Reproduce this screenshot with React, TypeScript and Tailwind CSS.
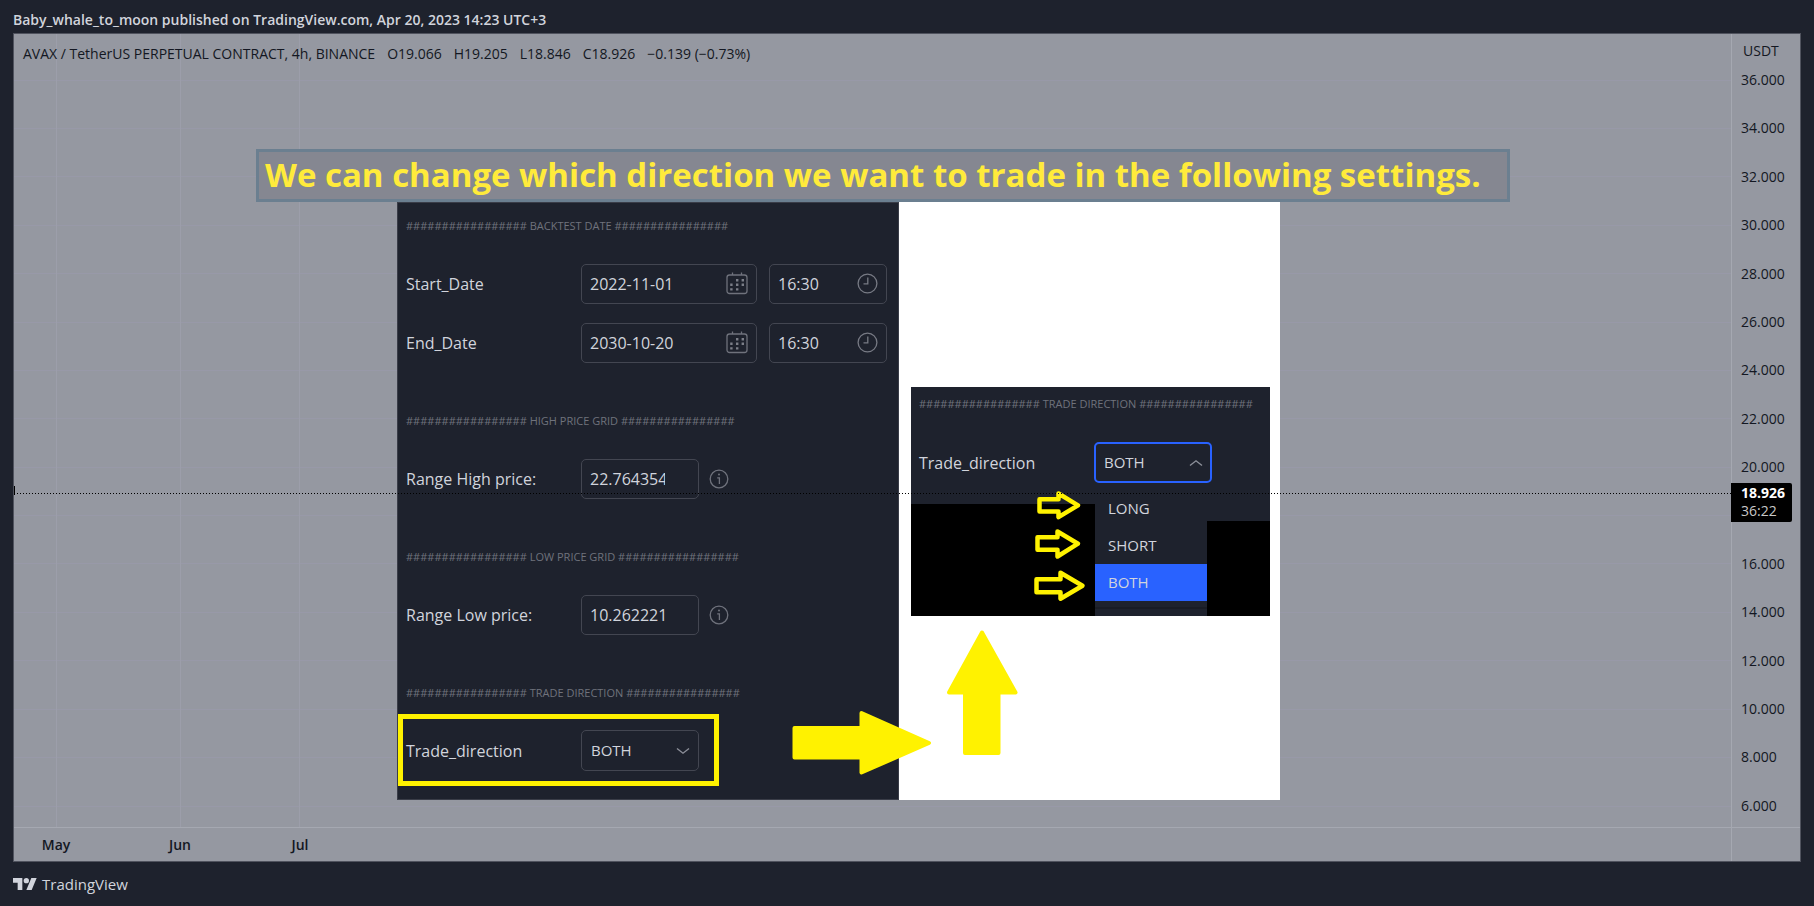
import type { ReactNode } from "react";

const prices = [36, 34, 32, 30, 28, 26, 24, 22, 20, 18, 16, 14, 12, 10, 8, 6];
const PLOT_HEIGHT = 793;
const FIRST_LINE = 46;
const LINE_STEP = 48.4;

function GridLines() {
  return (
    <svg className="absolute inset-0 size-full" aria-hidden="true" shapeRendering="crispEdges">
      {prices.map((p, i) => {
        const y = `${((FIRST_LINE + i * LINE_STEP) / PLOT_HEIGHT) * 100}%`;
        return <line key={p} x1="0" x2="100%" y1={y} y2={y} stroke="#9899a8" />;
      })}
      {[42, 166, 285].map((x) => (
        <line key={x} x1={x} x2={x} y1="0" y2="100%" stroke="#9c9eaa" />
      ))}
    </svg>
  );
}

function Heading({ title, after = 16 }: { title: string; after?: number }) {
  return (
    <h2 className="mb-[5px] flex h-[46px] items-center whitespace-nowrap text-[11px] text-[#6f727c]">
      {"#".repeat(17)} {title} {"#".repeat(after)}
    </h2>
  );
}

function Row({ id, label, children }: { id: string; label: string; children: ReactNode }) {
  return (
    <div className="flex h-[59px] items-center">
      <label htmlFor={id} className="w-[175px] shrink-0 whitespace-nowrap text-[16px] font-medium">
        {label}
      </label>
      {children}
    </div>
  );
}

function CalendarIcon() {
  return (
    <svg className="h-[23px] w-[22px] shrink-0" viewBox="0 0 22 23" fill="none" stroke="#6f727c" strokeWidth="1.3" aria-hidden="true">
      <rect x="1" y="3" width="20" height="18.5" rx="2.5" />
      <path d="M6.5 .5V3M15.5 .5V3" />
      <g fill="#7b7e88" stroke="none">
        <path d="M10 7h2.4v2.4H10zM15.6 7H18v2.4h-2.4zM4.2 11.6h2.4V14H4.2zM10 11.6h2.4V14H10zM15.6 11.6H18V14h-2.4zM4.2 16.2h2.4v2.4H4.2zM10 16.2h2.4v2.4H10z" />
      </g>
    </svg>
  );
}

function ClockIcon() {
  return (
    <svg className="size-[21px] shrink-0" viewBox="0 0 21 21" fill="none" stroke="#777a84" strokeWidth="1.3" aria-hidden="true">
      <circle cx="10.5" cy="10.5" r="9.4" />
      <path d="M10.8 4.5v6.3H6.5" />
    </svg>
  );
}

function InfoIcon() {
  return (
    <svg className="ml-[10px] size-[20px] shrink-0" viewBox="0 0 20 20" fill="none" stroke="#6f727c" strokeWidth="1.3" aria-hidden="true">
      <circle cx="10" cy="10" r="8.8" />
      <path d="M8.2 8.8h2.2V15" />
      <circle cx="10" cy="5.5" r="1" fill="#6f727c" stroke="none" />
    </svg>
  );
}

function Chevron({ up = false }: { up?: boolean }) {
  return (
    <svg className="pointer-events-none absolute right-[9px] top-1/2 h-[8px] w-[14px] -translate-y-1/2" viewBox="0 0 14 8" fill="none" stroke="#8c8f99" strokeWidth="1.4" aria-hidden="true">
      <path d={up ? "M1 6.5 7 1.800l6 4.700" : "M1 1.500 7 6.200l6-4.700"} />
    </svg>
  );
}

const box = "flex h-[40px] items-center rounded-[5px] border border-[#434651] px-[8px]";
const field = "min-w-0 flex-1 bg-transparent text-[16px] font-medium outline-none";

function DateRow({ id, label, date }: { id: string; label: string; date: string }) {
  return (
    <Row id={id} label={label}>
      <div className={`${box} w-[176px]`}>
        <input id={id} className={field} defaultValue={date} />
        <CalendarIcon />
      </div>
      <div className={`${box} ml-[12px] w-[118px]`}>
        <input aria-label={`${label} time`} className={field} defaultValue="16:30" />
        <ClockIcon />
      </div>
    </Row>
  );
}

function PriceRow({ id, label, price }: { id: string; label: string; price: string }) {
  return (
    <Row id={id} label={label}>
      <div className={`${box} w-[118px]`}>
        <input id={id} className="w-[75px] bg-transparent text-[16px] font-medium outline-none" defaultValue={price} />
      </div>
      <InfoIcon />
    </Row>
  );
}

function DirectionSelect({ id, open = false }: { id: string; open?: boolean }) {
  return (
    <div className="relative">
      <select
        id={id}
        defaultValue="BOTH"
        className={
          open
            ? "h-[41px] w-[118px] appearance-none rounded-[5px] border-2 border-[#2962ff] bg-transparent px-[8px] text-[15px] font-medium outline-none"
            : "h-[41px] w-[118px] appearance-none rounded-[5px] border border-[#434651] bg-transparent px-[9px] text-[15px] font-medium outline-none"
        }
      >
        <option>LONG</option>
        <option>SHORT</option>
        <option>BOTH</option>
      </select>
      <Chevron up={open} />
    </div>
  );
}

function SettingsPanel() {
  return (
    <section className="flex w-[502px] shrink-0 flex-col gap-[26px] border border-[#3a3d48] bg-[#1e222d] pl-[8px]">
      <div>
        <Heading title="BACKTEST DATE" />
        <DateRow id="start" label="Start_Date" date="2022-11-01" />
        <DateRow id="end" label="End_Date" date="2030-10-20" />
      </div>
      <div>
        <Heading title="HIGH PRICE GRID" />
        <PriceRow id="high" label="Range High price:" price="22.764354" />
      </div>
      <div>
        <Heading title="LOW PRICE GRID" after={17} />
        <PriceRow id="low" label="Range Low price:" price="10.262221" />
      </div>
      <div>
        <Heading title="TRADE DIRECTION" />
        <div className="relative">
          <div className="pointer-events-none absolute -left-[8px] -top-[7px] h-[72px] w-[321px] border-[5px] border-[#fff200]" />
          <Row id="direction" label="Trade_direction">
            <DirectionSelect id="direction" />
          </Row>
        </div>
      </div>
    </section>
  );
}

function OpenMenuPanel() {
  return (
    <section className="mt-[185px] flex h-[229px] w-[359px] flex-col overflow-hidden bg-[#1e222d]">
      <div className="h-[103px] pl-[8px]">
        <h2 className="mb-[11px] flex h-[35px] items-center whitespace-nowrap text-[11px] text-[#6f727c]">
          {"#".repeat(17)} TRADE DIRECTION {"#".repeat(16)}
        </h2>
        <Row id="direction-open" label="Trade_direction">
          <DirectionSelect id="direction-open" open />
        </Row>
      </div>
      <div className="flex flex-1">
        <div className="mt-[14px] w-[184px] bg-black" />
        <ul role="listbox" aria-label="Trade_direction" className="w-[112px] text-[15px] font-medium">
          {["LONG", "SHORT", "BOTH"].map((o) => (
            <li key={o} role="option" aria-selected={o === "BOTH"} className="flex h-[37px] items-center pl-[13px] aria-selected:bg-[#2962ff]">
              {o}
            </li>
          ))}
          <li role="presentation" className="mt-[6px] border-t-2 border-[#191c25]" />
        </ul>
        <div className="mt-[31px] flex-1 bg-black" />
      </div>
    </section>
  );
}

function Arrows() {
  return (
    <svg className="pointer-events-none absolute inset-0 size-full" viewBox="397 202 883 598" fill="#fff200" stroke="#fff200" strokeLinejoin="round" aria-hidden="true">
      <g strokeWidth="4">
        <path d="M794.5 728H861.5V713L929 743 861.5 772.500V757.500H794.500z" />
        <path d="M965 753V692.500H949L982 632.500 1015.500 692.500H998.500V753z" />
      </g>
      <g fill="none" strokeWidth="4.500">
        <path d="M1039.500 499.300H1058.500V493.500L1078 505.300 1058.500 517.200V511.500H1039.500z" />
        <path d="M1037.500 537.300H1057.500V531.500L1078 543.700 1057.500 556.500V549.700H1037.500z" />
        <path d="M1036.500 579.300H1060.500V572.700L1082.500 585.700 1060.500 598.700V592.300H1036.500z" />
      </g>
    </svg>
  );
}

export default function App() {
  return (
    <div className="flex min-h-screen flex-col bg-[#1e222d] px-[13px] font-['Open_Sans',sans-serif] text-[#d1d4dc]">
      <header className="flex h-[33px] items-center pt-[6px] text-[14px] font-semibold">
        Baby_whale_to_moon published on TradingView.com, Apr 20, 2023 14:23 UTC+3
      </header>

      <main className="grid flex-1 grid-cols-[1fr_69px] grid-rows-[1fr_34px] border border-[#50535e] bg-[#9598a1]">
        <div className="relative">
          <GridLines />
          <p className="relative flex h-[115px] gap-3 whitespace-pre pl-[9px] pt-[9px] text-[14px] leading-[22px] text-[#131722]">
            <span>AVAX / TetherUS PERPETUAL CONTRACT, 4h, BINANCE</span>
            <span>O19.066</span>
            <span>H19.205</span>
            <span>L18.846</span>
            <span>C18.926</span>
            <span>−0.139 (−0.73%)</span>
          </p>
          <h1 className="relative ml-[242px] flex h-[53px] w-[1254px] items-center whitespace-nowrap border-[3px] border-[#6b7f90] bg-[#858791] pb-[2px] pl-[6px] text-[33px] font-bold text-[#ffeb3b]">
            We can change which direction we want to trade in the following settings.
          </h1>
          <div className="relative ml-[383px] flex h-[598px] w-[883px] bg-white">
            <SettingsPanel />
            <div className="pl-[12px]">
              <OpenMenuPanel />
            </div>
            <Arrows />
          </div>
          <div className="absolute inset-x-0 top-[459px] h-px bg-[repeating-linear-gradient(90deg,#000_0_1px,transparent_1px_3px)]" />
          <div className="absolute left-0 top-[452px] h-[9px] w-px bg-black" />
        </div>

        <div className="relative flex flex-col border-l border-[#a5a8b1] pl-[9px] text-[14px] leading-5 text-[#131722]">
          <div className="h-[36px] pl-[2px] pt-[7px]">USDT</div>
          <div className="flex flex-1 flex-col justify-between pb-[11px]">
            {prices.map((p) => (
              <span key={p} className="h-5">
                {p === 18 ? "" : `${p}.000`}
              </span>
            ))}
          </div>
          <div className="absolute -left-px top-[449px] h-[39px] w-[61px] rounded-r-[2px] bg-black pl-[10px] pt-px leading-[18px]">
            <div className="font-bold text-white">18.926</div>
            <div className="text-[#c8c8c8]">36:22</div>
          </div>
        </div>

        <div className="flex items-center border-t border-[#a5a8b1] text-center text-[14px] font-semibold text-[#131722]">
          <span className="w-[84px]">May</span>
          <span className="w-[164px]">Jun</span>
          <span className="w-[76px]">Jul</span>
        </div>
        <div className="border-l border-t border-[#a5a8b1]" />
      </main>

      <footer className="flex h-[44px] items-center gap-[5px] text-[15px] font-medium">
        <svg className="h-[12px] w-[24px]" viewBox="0 4 36 18" fill="#d1d4dc" aria-hidden="true">
          <path d="M14 22H7V11H0V4h14v18zM28 22h-8l7.500-18h8L28 22z" />
          <circle cx="20" cy="8" r="4" />
        </svg>
        TradingView
      </footer>
    </div>
  );
}
